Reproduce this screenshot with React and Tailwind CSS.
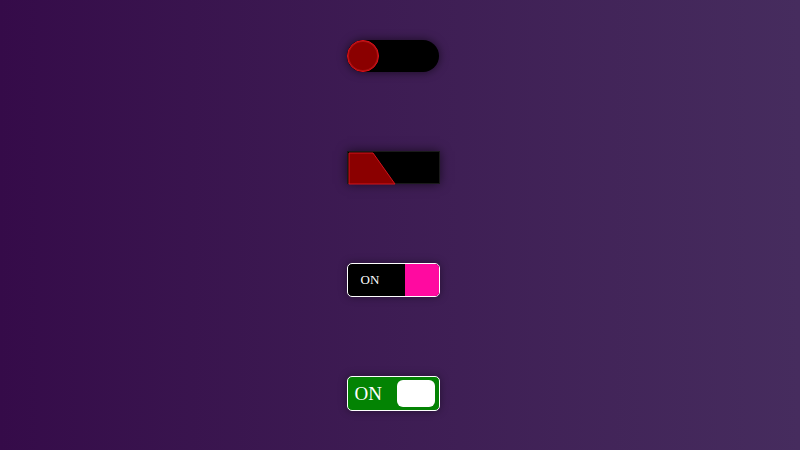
export default function App() {
  return (
    <div className="flex flex-col items-center justify-around h-[450px] w-[800px] pr-[14px] bg-gradient-to-r from-[#350b49] to-[#462c5e]" style={{ fontFamily: "'Liberation Serif', serif" }}>
      {/* round toggle */}
      <div className="flex items-center w-[92px] h-[32px] rounded-full bg-black shadow-[0_0_10px_rgba(0,0,0,0.6)]">
        <div className="w-[32px] h-[32px] rounded-full bg-[#8b0000] border border-[#e0101a] shadow-[inset_0_0_0_1px_rgba(255,80,80,0.25)]" />
      </div>

      {/* slanted toggle */}
      <div className="relative w-[93px] h-[33px] bg-black border border-[#1a1a1a] shadow-[0_0_10px_rgba(0,0,0,0.6)]">
        <svg className="absolute left-0 top-0" width="50" height="33" viewBox="0 0 50 33">
          <polygon points="1,1 25,1 47,32 1,32" fill="#8b0000" stroke="#d4141c" strokeWidth="1" />
        </svg>
      </div>

      {/* ON / pink */}
      <div className="flex w-[93px] h-[34px] rounded-[5px] border border-white overflow-hidden bg-black shadow-[0_0_8px_rgba(0,0,0,0.4)]">
        <div className="flex-1 flex items-center pl-[13px] text-[13px] text-white">ON</div>
        <div className="w-[34px] h-full bg-[#ff0aa0]" />
      </div>

      {/* green ON */}
      <div className="flex items-center justify-between w-[93px] h-[35px] rounded-[5px] border border-white bg-[#038303] pl-[7px] pr-[4px] shadow-[0_0_8px_rgba(0,0,0,0.4)]">
        <span className="text-[19px] text-white leading-none">ON</span>
        <div className="w-[38px] h-[27px] rounded-[6px] bg-white" />
      </div>
    </div>
  );
}
